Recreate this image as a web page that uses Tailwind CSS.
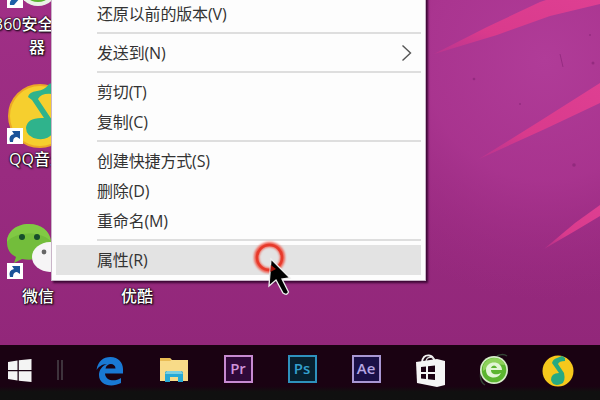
<!DOCTYPE html>
<html lang="zh-CN">
<head>
    <meta charset="UTF-8">
    <meta name="viewport" content="width=device-width, initial-scale=1.0">
    <title>桌面</title>
    <script src="https://cdn.jsdelivr.net/npm/@tailwindcss/browser@4"></script>
</head>
<body class="w-[600px] h-[400px] overflow-hidden flex flex-col bg-black font-['Open_Sans','Noto_Sans_CJK_SC',sans-serif]">
    <main class="relative h-[345px] shrink-0 overflow-hidden bg-linear-to-b from-[#a02f86] to-[#92277a]">
        <!-- wallpaper -->
        <svg class="absolute inset-0" width="600" height="345" viewBox="0 0 600 345">
            <defs>
                <radialGradient id="glow" gradientUnits="userSpaceOnUse" cx="545" cy="60" r="240">
                    <stop offset="0" stop-color="#b03c98"/>
                    <stop offset="0.5" stop-color="#ac3692" stop-opacity="0.8"/>
                    <stop offset="1" stop-color="#a02c86" stop-opacity="0"/>
                </radialGradient>
                <linearGradient id="ray" x1="0" x2="1" y1="1" y2="0">
                    <stop offset="0" stop-color="#d0358c" stop-opacity="0.4"/>
                    <stop offset="0.35" stop-color="#d93a8c"/>
                    <stop offset="1" stop-color="#de3f92"/>
                </linearGradient>
            </defs>
            <rect width="600" height="345" fill="url(#glow)"/>
            <path d="M434 54 L487 27 L540 2 L546 0 H600 V4 L550 16 L497 35 Z" fill="url(#ray)"/>
            <path d="M479 159 L540 121 L600 83 V103 L545 129 Z" fill="url(#ray)"/>
            <path d="M544 249 L575 223 L600 205 V216 L575 231 Z" fill="url(#ray)"/>
            <g fill="#842373" opacity="0.6">
                <circle cx="574" cy="165" r="1.8"/>
                <circle cx="593" cy="63" r="1.5"/>
                <circle cx="474" cy="79" r="1.3"/>
                <circle cx="520" cy="104" r="1"/>
                <circle cx="590" cy="35" r="1"/>
                <path d="M560 54 L563 67" stroke="#842373" stroke-width="1"/>
            </g>
        </svg>

        <!-- desktop icons -->
        <svg class="absolute left-0 top-0" width="60" height="10" viewBox="0 0 60 10">
            <circle cx="38" cy="-14" r="20" fill="#e9f2e6"/>
            <circle cx="38" cy="-15" r="17" fill="#5cb531"/>
            <rect x="7" y="-8" width="16" height="16" fill="#fff"/>
            <path d="M10 5 Q9 -1 16 -2 L20 -2 L14 5 Z" fill="#1d5fa8"/>
        </svg>
        <div class="absolute -left-[6px] top-[13px] text-[16px] leading-[23px] font-medium text-white whitespace-nowrap [text-shadow:1px_1px_2px_#000,0_0_2px_#000,0_0_1px_#000]">360安全浏览<br><span class="pl-[35px]">器</span></div>

        <svg class="absolute left-0 top-[80px]" width="60" height="70" viewBox="0 0 60 70">
            <circle cx="40" cy="36" r="31" fill="#f6cf2e"/>
            <circle cx="40" cy="36" r="31" fill="none" stroke="#eda827" stroke-width="2"/>
            <path d="M28 17 Q29 12 37 11 Q45 10 49 4 L52 3 V14 Q41 13 38 19 L52 40 V54 Q48 60 38 59 Q26 57 26 48 Q27 37 44 38 L32 20 Z" fill="#2fb38c"/>
            <rect x="7" y="48" width="16" height="16" fill="#fff"/>
            <path d="M10 62 Q8 55 14 54 L12 51 H20 V59 L17 57 Q13 57 13 62 Z" fill="#1b5399"/>
        </svg>
        <div class="absolute left-[9px] top-[148px] text-[16px] leading-[23px] font-medium text-white whitespace-nowrap [text-shadow:1px_1px_2px_#000,0_0_2px_#000,0_0_1px_#000]">QQ音乐</div>

        <svg class="absolute left-0 top-[220px]" width="60" height="64" viewBox="0 0 60 64">
            <path d="M29 4 C16 4 7 12 7 22 C7 29 10 34 16 37 L14 43 L22 39 C38 42 52 35 51 21 C50 11 41 4 29 4 Z" fill="#73bd3b"/>
            <path d="M29 4 C16 4 7 12 7 22 C15 12 38 10 51 21 C50 11 41 4 29 4 Z" fill="#8bd04b" opacity="0.6"/>
            <circle cx="22" cy="17" r="3" fill="#164e2c"/>
            <circle cx="37" cy="17" r="3" fill="#164e2c"/>
            <ellipse cx="50" cy="37" rx="18" ry="15" fill="#f6f5f6"/>
            <circle cx="44" cy="32" r="2.4" fill="#666"/>
            <rect x="7" y="43" width="16" height="16" fill="#fff"/>
            <path d="M10 57 Q8 50 14 49 L12 46 H20 V54 L17 52 Q13 52 13 57 Z" fill="#1b5399"/>
        </svg>
        <div class="absolute left-[22px] top-[285px] text-[16px] leading-[23px] font-medium text-white [text-shadow:1px_1px_2px_#000,0_0_2px_#000,0_0_1px_#000]">微信</div>
        <div class="absolute left-[121px] top-[285px] text-[16px] leading-[23px] font-medium text-white [text-shadow:1px_1px_2px_#000,0_0_2px_#000,0_0_1px_#000]">优酷</div>

        <!-- context menu -->
        <div class="absolute left-[51px] -top-[7px] w-[375px] h-[288px] pt-[6px] pl-[4px] pr-[4px] bg-[#fdfdfd] border-l border-r border-b border-[#c9b5c8] shadow-[2px_2px_2px_#3c0735] text-[16px] leading-[30px] tracking-[-0.15px] text-[#333]">
            <div class="h-[30px] pl-[41px]">还原以前的版本(V)</div>
            <div class="h-[9px] pt-[3px] pl-[41px]"><div class="h-[2px] bg-[#dedede]"></div></div>
            <div class="h-[30px] pl-[41px] pr-[9px] flex items-center justify-between">
                <span>发送到(N)</span>
                <svg width="11" height="18" viewBox="0 0 11 18" fill="none" stroke="#555" stroke-width="1.4"><path d="M1.5 1.5 L9.5 9 L1.5 16.5"/></svg>
            </div>
            <div class="h-[9px] pt-[3px] pl-[41px]"><div class="h-[2px] bg-[#dedede]"></div></div>
            <div class="h-[30px] pl-[41px]">剪切(T)</div>
            <div class="h-[30px] pl-[41px]">复制(C)</div>
            <div class="h-[9px] pt-[3px] pl-[41px]"><div class="h-[2px] bg-[#dedede]"></div></div>
            <div class="h-[30px] pl-[41px]">创建快捷方式(S)</div>
            <div class="h-[30px] pl-[41px]">删除(D)</div>
            <div class="h-[30px] pl-[41px]">重命名(M)</div>
            <div class="h-[9px] pt-[3px] pl-[41px]"><div class="h-[2px] bg-[#dedede]"></div></div>
            <div class="h-[30px] pl-[41px] bg-[#e3e3e3]">属性(R)</div>
        </div>

        <!-- click ring and pointer -->
        <svg class="absolute left-[250px] top-[238px]" width="50" height="64" viewBox="0 0 50 64">
            <circle cx="19.5" cy="19.5" r="13" fill="none" stroke="#f05a4c" stroke-width="5" class="blur-[1px]"/>
            <circle cx="19.5" cy="19.5" r="12.5" fill="none" stroke="#e63a2b" stroke-width="2.5"/>
            <path d="M21 21 L19 48 L26 42 L33 55 Q37 58 38.5 54 L32 41 L40 40 Z" fill="#000" stroke="#eee" stroke-width="1.3"/>
            <path d="M20.8 27 L20.3 34 L26 31 Z" fill="#a5160d"/>
        </svg>
    </main>

    <!-- taskbar -->
    <footer class="h-[55px] shrink-0 flex items-start pt-[9px] pl-[8px] bg-linear-to-b from-[#1a0212] from-75% to-[#101010] to-85%">
        <svg class="mt-[5px]" width="24" height="24" viewBox="0 0 24 24" fill="#f4f4f4">
            <path d="M0 3 L9.5 1.5 V11 H0 Z M10.8 1.3 L23.5 0 V11 H10.8 Z M0 12.3 H9.5 V21.5 L0 20 Z M10.8 12.3 H23.5 V23 L10.8 21.7 Z"/>
        </svg>
        <div class="ml-[25px] mt-[6px] h-[20px] w-[6px] border-x-2 border-[#3e333c]"></div>

        <div class="ml-[15px] h-[34px] grid grid-cols-[repeat(8,64px)] shrink-0 items-center justify-items-center">
            <svg width="30" height="30" viewBox="0 0 30 30">
                <path d="M1.5 14 C3 5 8 1 15.5 1 C23.5 1 28 7 28 13 V17.5 H10 C10.5 25 20 26 26 22 V27 C16 32 4 29 4 19 C4 14 7 10 12 8 C7 8 3.5 11 1.5 14 Z M10.5 12.5 H20.5 C20.5 6.5 11.5 6.5 10.5 12.5 Z" fill="#1979d4" fill-rule="evenodd"/>
            </svg>
            <svg class="-mt-[4px]" width="30" height="30" viewBox="0 0 30 30">
                <path d="M1 4 H11 L13 6 H29 V27 H1 Z" fill="#f8db88"/>
                <path d="M1 4 H11 L12 7 H1 Z" fill="#e9bc54"/>
                <path d="M6 28 V19 Q6 17 8 17 H22 Q24 17 24 19 V28 H19 V23 H11 V28 Z" fill="#27a9d5"/>
                <path d="M8 17 H22 L24 20 H6 Z" fill="#7acfe0"/>
            </svg>
            <div class="w-[29px] h-[28px] mb-[5px] flex items-center justify-center border-2 border-[#c78ad1] bg-[#30093a] text-[#cf93da] font-['Open_Sans'] font-semibold text-[15px] leading-none">Pr</div>
            <div class="w-[29px] h-[28px] mb-[5px] flex items-center justify-center border-2 border-[#2e91bd] bg-[#07202f] text-[#34a0cf] font-['Open_Sans'] font-semibold text-[15px] leading-none">Ps</div>
            <div class="w-[29px] h-[28px] mb-[5px] flex items-center justify-center border-2 border-[#a897d3] bg-[#1a1047] text-[#b5a6e2] font-['Open_Sans'] font-semibold text-[15px] leading-none">Ae</div>
            <svg class="-mt-[1px]" width="30" height="34" viewBox="0 0 30 34">
                <path d="M7 8 Q8 1 14 1.5 Q18 2 19 6" fill="none" stroke="#f2f2f2" stroke-width="1.8"/>
                <path d="M11 7 Q12 3 16 3.5 Q20 4 20 7" fill="none" stroke="#ddd" stroke-width="1.2"/>
                <path d="M1 8 L22 5 L30 7 V31 L22 33 L2 29 Z" fill="#f5f5f5"/>
                <path d="M6 13 L11 12.5 V18 H6 Z M13 12.2 L20 11.5 V18 H13 Z M6 20 H11 V25 L6 24.5 Z M13 20 H20 V26 L13 25.3 Z" fill="#1c0213"/>
            </svg>
            <svg class="-mt-[2px]" width="32" height="34" viewBox="0 0 32 34">
                <path d="M19 3 Q25 0 29 3 M3 19 Q1 28 7 32" fill="none" stroke="#344536" stroke-width="1.5"/>
                <circle cx="16" cy="17" r="14" fill="#d7ecc9"/>
                <circle cx="16" cy="17" r="12.3" fill="#5bb52f"/>
                <path d="M5 13 Q9 4 18 5 Q25 6 27 12 Q16 10 5 18 Z" fill="#8ed15b"/>
                <path d="M8 17 C8 7 24 7 24 17 H13 C13 22 19 22 23 20 C20 27 8 26 8 17 Z M13 15 H19 C18 11.5 14 11.5 13 15 Z" fill="#e2f5d6" fill-rule="evenodd"/>
            </svg>
            <svg width="32" height="32" viewBox="0 0 32 32">
                <circle cx="16" cy="16" r="15.5" fill="#f6c81c"/>
                <path d="M10 8 Q11 4 15 3 L20 1 L23 3 V6 Q17 6 16 9 L22 18 Q24 27 19 29 Q11 32 9 25 Q9 18 17 18 Z" fill="#27a982"/>
            </svg>
        </div>
    </footer>
</body>
</html>
